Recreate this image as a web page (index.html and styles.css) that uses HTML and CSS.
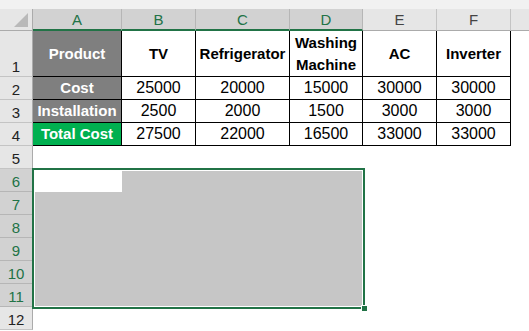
FILE: index.html
```html
<!DOCTYPE html>
<html lang="en">

<head>
    <meta charset="UTF-8">
    <title>Total Cost</title>
    <link rel="stylesheet" href="styles.css">
</head>

<body>
    <div class="strip"></div>
    <div class="sheet">
        <!-- column headers -->
        <div class="ch corner"><span class="tri"></span></div>
        <div class="ch sel">A</div>
        <div class="ch sel">B</div>
        <div class="ch sel">C</div>
        <div class="ch sel">D</div>
        <div class="ch">E</div>
        <div class="ch">F</div>
        <div class="ch last"></div>

        <!-- row 1 -->
        <div class="rh">1</div>
        <div class="c label">Product</div>
        <div class="c head">TV</div>
        <div class="c head">Refrigerator</div>
        <div class="c head">Washing<br>Machine</div>
        <div class="c head">AC</div>
        <div class="c head">Inverter</div>
        <div class="e"></div>

        <!-- row 2 -->
        <div class="rh">2</div>
        <div class="c label">Cost</div>
        <div class="c">25000</div>
        <div class="c">20000</div>
        <div class="c">15000</div>
        <div class="c">30000</div>
        <div class="c">30000</div>
        <div class="e"></div>

        <!-- row 3 -->
        <div class="rh">3</div>
        <div class="c label">Installation</div>
        <div class="c">2500</div>
        <div class="c">2000</div>
        <div class="c">1500</div>
        <div class="c">3000</div>
        <div class="c">3000</div>
        <div class="e"></div>

        <!-- row 4 -->
        <div class="rh">4</div>
        <div class="c label total">Total Cost</div>
        <div class="c">27500</div>
        <div class="c">22000</div>
        <div class="c">16500</div>
        <div class="c">33000</div>
        <div class="c">33000</div>
        <div class="e"></div>

        <!-- row 5 -->
        <div class="rh">5</div>
        <div class="e"></div><div class="e"></div><div class="e"></div><div class="e"></div>
        <div class="e"></div><div class="e"></div><div class="e"></div>

        <!-- selected range A6:D11 -->
        <div class="selection">
            <div class="active"></div>
            <span class="handle"></span>
        </div>

        <div class="rh sel">6</div>
        <div class="e"></div><div class="e"></div><div class="e"></div>
        <div class="rh sel">7</div>
        <div class="e"></div><div class="e"></div><div class="e"></div>
        <div class="rh sel">8</div>
        <div class="e"></div><div class="e"></div><div class="e"></div>
        <div class="rh sel">9</div>
        <div class="e"></div><div class="e"></div><div class="e"></div>
        <div class="rh sel">10</div>
        <div class="e"></div><div class="e"></div><div class="e"></div>
        <div class="rh sel">11</div>
        <div class="e"></div><div class="e"></div><div class="e"></div>

        <!-- row 12 -->
        <div class="rh">12</div>
        <div class="e"></div><div class="e"></div><div class="e"></div><div class="e"></div>
        <div class="e"></div><div class="e"></div><div class="e"></div>
    </div>
</body>

</html>
```

FILE: styles.css
```css
* {
    box-sizing: border-box;
}

body {
    margin: 0;
    width: 529px;
    height: 331px;
    overflow: hidden;
    background-color: #ffffff;
    font-family: "Liberation Sans", Arial, sans-serif;
    color: #000000;
}

.strip {
    height: 9px;
    background-color: #f1f1f1;
}

.sheet {
    display: grid;
    grid-template-columns: 33px 89px 74px 94px 73px 74px 74px 1fr;
    grid-template-rows: 22px 46px repeat(11, 23px);
}

/* column headers */
.ch {
    display: flex;
    align-items: center;
    justify-content: center;
    background-color: #e6e6e6;
    border-right: 1px solid #c4c4c4;
    border-bottom: 1px solid #ababab;
    font-size: 15px;
    color: #444444;
}

.ch.sel {
    background-color: #d2d2d2;
    color: #217346;
    border-bottom: 2px solid #217346;
    border-right-color: #b6b6b6;
}

.ch.corner {
    position: relative;
    border-right-color: #ababab;
}

.ch.last {
    border-right: none;
}

.tri {
    position: absolute;
    right: 4px;
    bottom: 3px;
    width: 0;
    height: 0;
    border-left: 14px solid transparent;
    border-bottom: 14px solid #b9b9b9;
}

/* row headers */
.rh {
    grid-column: 1;
    display: flex;
    align-items: flex-end;
    justify-content: center;
    padding-bottom: 1px;
    background-color: #e6e6e6;
    border-right: 1px solid #ababab;
    border-bottom: 1px solid #c4c4c4;
    font-size: 15px;
    color: #222222;
}

.rh.sel {
    background-color: #d2d2d2;
    color: #217346;
    border-bottom-color: #b6b6b6;
}

/* table cells */
.c {
    display: flex;
    align-items: center;
    justify-content: center;
    text-align: center;
    border-right: 1px solid #000000;
    border-bottom: 1px solid #000000;
    font-size: 16px;
    line-height: 18px;
}

.c.head,
.c.label {
    font-size: 15px;
    font-weight: bold;
    line-height: 22px;
}

.c.label {
    background-color: #7f7f7f;
    color: #ffffff;
    border-bottom-color: #000000;
}

.c.total {
    background-color: #00b050;
}

.e {
    background-color: #ffffff;
}

/* selected range */
.selection {
    grid-column: 2 / 6;
    grid-row: 7 / 13;
    position: relative;
    margin: -1px -2px -2px -1px;
    border: 2px solid #217346;
    background-color: #c6c6c6;
    box-shadow: inset 0 0 0 1px #ffffff;
}

.active {
    width: 88px;
    height: 22px;
    background-color: #ffffff;
}

.handle {
    position: absolute;
    right: -5px;
    bottom: -5px;
    width: 7px;
    height: 7px;
    background-color: #217346;
    border: 1px solid #ffffff;
}
```
